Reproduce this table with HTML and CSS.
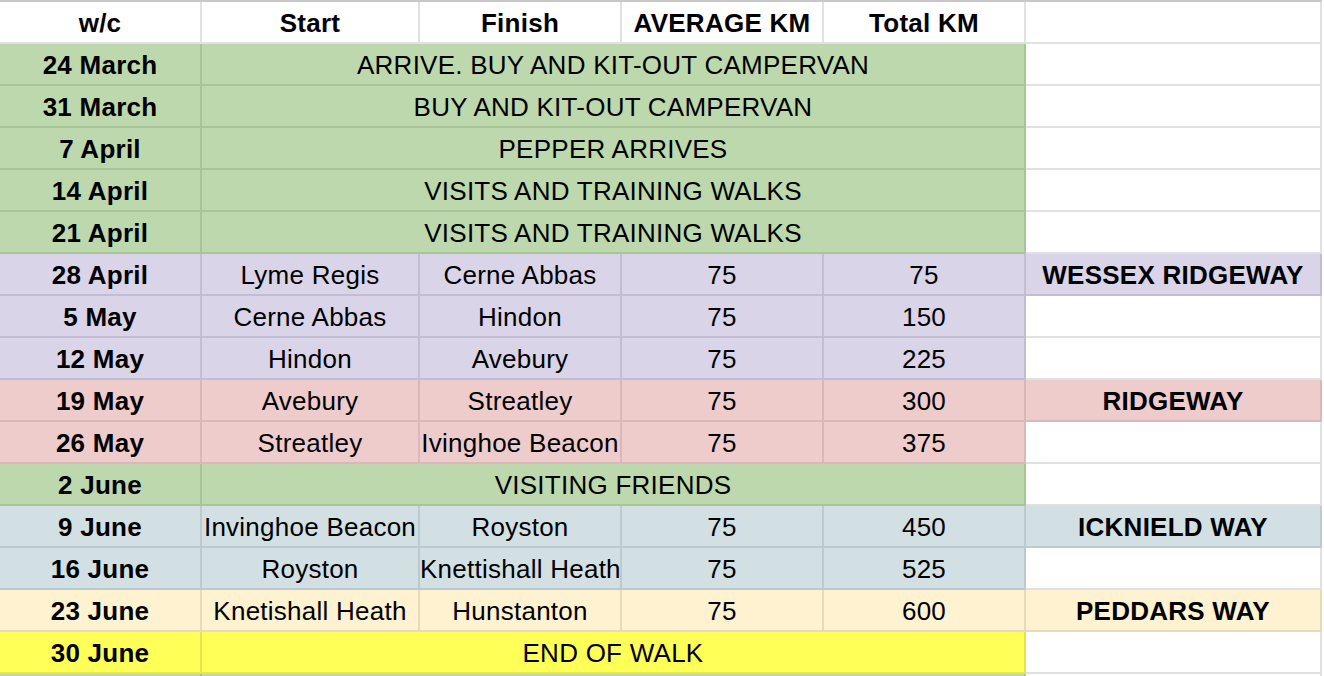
FILE: index.html
```html
<!DOCTYPE html>
<html>
<head>
<meta charset="utf-8">
<link rel="stylesheet" href="styles.css">
</head>
<body>
<div class="frame">
<div class="sheet">
  <div class="cell w bold">w/c</div>
  <div class="cell w bold">Start</div>
  <div class="cell w bold">Finish</div>
  <div class="cell w bold">AVERAGE KM</div>
  <div class="cell w bold">Total KM</div>
  <div class="cell w"></div>

  <div class="cell g bold">24 March</div>
  <div class="cell g span4">ARRIVE. BUY AND KIT-OUT CAMPERVAN</div>
  <div class="cell w"></div>

  <div class="cell g bold">31 March</div>
  <div class="cell g span4">BUY AND KIT-OUT CAMPERVAN</div>
  <div class="cell w"></div>

  <div class="cell g bold">7 April</div>
  <div class="cell g span4">PEPPER ARRIVES</div>
  <div class="cell w"></div>

  <div class="cell g bold">14 April</div>
  <div class="cell g span4">VISITS AND TRAINING WALKS</div>
  <div class="cell w"></div>

  <div class="cell g bold">21 April</div>
  <div class="cell g span4">VISITS AND TRAINING WALKS</div>
  <div class="cell w"></div>

  <div class="cell p bold">28 April</div>
  <div class="cell p">Lyme Regis</div>
  <div class="cell p">Cerne Abbas</div>
  <div class="cell p">75</div>
  <div class="cell p">75</div>
  <div class="cell p bold">WESSEX RIDGEWAY</div>

  <div class="cell p bold">5 May</div>
  <div class="cell p">Cerne Abbas</div>
  <div class="cell p">Hindon</div>
  <div class="cell p">75</div>
  <div class="cell p">150</div>
  <div class="cell w"></div>

  <div class="cell p bold">12 May</div>
  <div class="cell p">Hindon</div>
  <div class="cell p">Avebury</div>
  <div class="cell p">75</div>
  <div class="cell p">225</div>
  <div class="cell w"></div>

  <div class="cell r bold">19 May</div>
  <div class="cell r">Avebury</div>
  <div class="cell r">Streatley</div>
  <div class="cell r">75</div>
  <div class="cell r">300</div>
  <div class="cell r bold">RIDGEWAY</div>

  <div class="cell r bold">26 May</div>
  <div class="cell r">Streatley</div>
  <div class="cell r">Ivinghoe Beacon</div>
  <div class="cell r">75</div>
  <div class="cell r">375</div>
  <div class="cell w"></div>

  <div class="cell g bold">2 June</div>
  <div class="cell g span4">VISITING FRIENDS</div>
  <div class="cell w"></div>

  <div class="cell b bold">9 June</div>
  <div class="cell b">Invinghoe Beacon</div>
  <div class="cell b">Royston</div>
  <div class="cell b">75</div>
  <div class="cell b">450</div>
  <div class="cell b bold">ICKNIELD WAY</div>

  <div class="cell b bold">16 June</div>
  <div class="cell b">Royston</div>
  <div class="cell b">Knettishall Heath</div>
  <div class="cell b">75</div>
  <div class="cell b">525</div>
  <div class="cell w"></div>

  <div class="cell c bold">23 June</div>
  <div class="cell c">Knetishall Heath</div>
  <div class="cell c">Hunstanton</div>
  <div class="cell c">75</div>
  <div class="cell c">600</div>
  <div class="cell c bold">PEDDARS WAY</div>

  <div class="cell y bold">30 June</div>
  <div class="cell y span4">END OF WALK</div>
  <div class="cell w"></div>

  <div class="cell g"></div>
  <div class="cell g span4"></div>
  <div class="cell w"></div>
</div>
</div>
</body>
</html>
```

FILE: styles.css
```css
html, body {
  margin: 0;
  padding: 0;
  background: #ffffff;
  overflow: hidden;
}

body {
  font-family: "Liberation Sans", Arial, sans-serif;
  color: #000000;
}

.frame {
  height: 676px;
  overflow: hidden;
}

.sheet {
  display: grid;
  grid-template-columns: 202px 218px 202px 202px 202px 296px;
  grid-auto-rows: 42px;
  border-top: 2px solid #c7c7c7;
  width: 1322px;
}

.cell {
  box-sizing: border-box;
  height: 42px;
  border-right: 2px solid #e1e1e1;
  border-bottom: 2px solid #e1e1e1;
  font-size: 26px;
  letter-spacing: 0.25px;
  line-height: 36px;
  padding-top: 3px;
  text-align: center;
  white-space: nowrap;
  overflow: hidden;
}

.bold {
  font-weight: bold;
}

.span4 {
  grid-column: span 4;
}

.w {
  background: #ffffff;
}

.g {
  background: #bcd8ac;
  border-color: #a7c49a;
}

.p {
  background: #d9d4e8;
  border-color: #c3bdd3;
}

.r {
  background: #eecccc;
  border-color: #d8b8b8;
}

.b {
  background: #d2e0e3;
  border-color: #bccacd;
}

.c {
  background: #fef2d0;
  border-color: #e6dab8;
}

.y {
  background: #ffff57;
  border-color: #e5e54e;
}
```
